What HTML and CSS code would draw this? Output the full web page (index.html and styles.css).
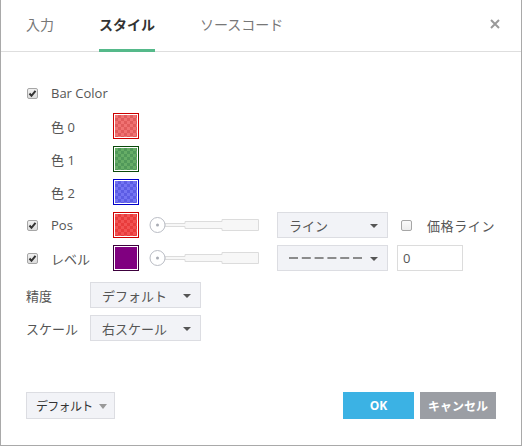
FILE: index.html
```html
<!DOCTYPE html>
<html lang="ja">
<head>
    <meta charset="UTF-8">
    <title>スタイル</title>
    <link rel="stylesheet" href="styles.css">
</head>
<body>
    <div class="dialog">
        <div class="tabs">
            <div class="tab">入力</div>
            <div class="tab active">スタイル</div>
            <div class="tab">ソースコード</div>
            <div class="close">
                <svg width="10" height="10" viewBox="0 0 10 10"><path d="M1 1L9 9M9 1L1 9" stroke="#9a9a9a" stroke-width="2"/></svg>
            </div>
        </div>

        <div class="content">
            <div class="row">
                <div class="chk-cell"><span class="chk on"><svg width="9" height="9" viewBox="0 0 9 9"><path d="M1.5 4.5L3.5 6.8L7.5 1.8" stroke="#333" stroke-width="2" fill="none"/></svg></span></div>
                <div class="lbl">Bar Color</div>
            </div>
            <div class="row">
                <div class="chk-cell"></div>
                <div class="lbl">色 0</div>
                <div class="swatch sw-red"><i></i></div>
            </div>
            <div class="row">
                <div class="chk-cell"></div>
                <div class="lbl">色 1</div>
                <div class="swatch sw-green"><i></i></div>
            </div>
            <div class="row">
                <div class="chk-cell"></div>
                <div class="lbl">色 2</div>
                <div class="swatch sw-blue"><i></i></div>
            </div>
            <div class="row">
                <div class="chk-cell"><span class="chk on"><svg width="9" height="9" viewBox="0 0 9 9"><path d="M1.5 4.5L3.5 6.8L7.5 1.8" stroke="#333" stroke-width="2" fill="none"/></svg></span></div>
                <div class="lbl">Pos</div>
                <div class="swatch sw-pos"><i></i></div>
                <svg class="slider" width="110" height="26" viewBox="0 0 110 26">
                    <path d="M16 11.5H36V9.5H73V7.5H109.5V18.5H73V16.5H36V14.5H16Z" fill="#f7f7f7" stroke="#dcdcdc"/>
                    <circle cx="8.5" cy="13" r="7.5" fill="#fff" stroke="#b9bcc4"/>
                    <circle cx="8.5" cy="13" r="1.5" fill="#a9acb4"/>
                </svg>
                <div class="select sel-line">ライン<span class="caret"></span></div>
                <span class="chk off price-chk"></span>
                <div class="side-lbl">価格ライン</div>
            </div>
            <div class="row">
                <div class="chk-cell"><span class="chk on"><svg width="9" height="9" viewBox="0 0 9 9"><path d="M1.5 4.5L3.5 6.8L7.5 1.8" stroke="#333" stroke-width="2" fill="none"/></svg></span></div>
                <div class="lbl">レベル</div>
                <div class="swatch sw-purple"><i></i></div>
                <svg class="slider" width="110" height="26" viewBox="0 0 110 26">
                    <path d="M16 11.5H36V9.5H73V7.5H109.5V18.5H73V16.5H36V14.5H16Z" fill="#f7f7f7" stroke="#dcdcdc"/>
                    <circle cx="8.5" cy="13" r="7.5" fill="#fff" stroke="#b9bcc4"/>
                    <circle cx="8.5" cy="13" r="1.5" fill="#a9acb4"/>
                </svg>
                <div class="select sel-line">
                    <svg width="74" height="4" viewBox="0 0 74 4"><line x1="0" y1="2" x2="73" y2="2" stroke="#6a6a6a" stroke-width="1.5" stroke-dasharray="9 3.8"/></svg>
                    <span class="caret"></span>
                </div>
                <div class="num-input">0</div>
            </div>

            <div class="row opt-row">
                <div class="opt-lbl">精度</div>
                <div class="select sel-opt">デフォルト<span class="caret"></span></div>
            </div>
            <div class="row">
                <div class="opt-lbl">スケール</div>
                <div class="select sel-opt">右スケール<span class="caret"></span></div>
            </div>
        </div>

        <div class="footer">
            <div class="btn-default">デフォルト<span class="caret big"></span></div>
            <div class="btn btn-ok">OK</div>
            <div class="btn btn-cancel">キャンセル</div>
        </div>
    </div>
</body>
</html>
```

FILE: styles.css
```css
* {
    margin: 0;
    padding: 0;
    box-sizing: border-box;
}
body {
    font-family: "Open Sans", "Noto Sans CJK JP", sans-serif;
    font-size: 13px;
    color: #555;
    background: #fff;
}
.dialog {
    width: 522px;
    height: 446px;
    border: 1px solid #a9a9a9;
    border-top: none;
    display: flex;
    flex-direction: column;
}
.tabs {
    display: flex;
    height: 52px;
    padding-left: 25px;
    border-bottom: 1px solid #dedede;
}
.tab {
    display: flex;
    align-items: center;
    font-size: 14px;
    color: #777;
    margin-right: 45px;
    padding-bottom: 2px;
    border-bottom: 3px solid transparent;
    margin-bottom: -1px;
}
.tab.active {
    color: #333;
    font-weight: bold;
    border-bottom-color: #55b98a;
}
.close {
    margin-left: auto;
    margin-right: 21px;
    display: flex;
    align-items: center;
    padding-bottom: 4px;
}
.content {
    padding: 28px 25px 0 25px;
}
.row {
    display: flex;
    align-items: center;
    height: 26px;
    margin-bottom: 7px;
}
.opt-row {
    margin-top: 11px;
}
.chk-cell {
    width: 25px;
    display: flex;
    align-items: center;
}
.chk {
    display: inline-flex;
    align-items: center;
    justify-content: center;
    width: 11px;
    height: 11px;
    margin-left: 1px;
    border: 1px solid #a6a6a6;
    border-radius: 2px;
    background: linear-gradient(#f0f0f0, #dcdcdc);
}
.chk.off {
    background: linear-gradient(#fafafa, #ececec);
}
.lbl {
    width: 62px;
    color: #555;
}
.swatch {
    width: 26px;
    height: 26px;
    border: 1px solid #c00;
    padding: 1px;
    background: #fff;
}
.swatch i {
    display: block;
    width: 100%;
    height: 100%;
    background-size: 6px 6px;
    background-position: 0 0, 3px 3px;
}
.sw-red i {
    background-color: #f07272;
    background-image: linear-gradient(45deg, #e05c5c 25%, transparent 25%, transparent 75%, #e05c5c 75%),
        linear-gradient(45deg, #e05c5c 25%, transparent 25%, transparent 75%, #e05c5c 75%);
}
.sw-green {
    border-color: #0b4a0b;
}
.sw-green i {
    background-color: #66ad66;
    background-image: linear-gradient(45deg, #51995a 25%, transparent 25%, transparent 75%, #51995a 75%),
        linear-gradient(45deg, #51995a 25%, transparent 25%, transparent 75%, #51995a 75%);
}
.sw-blue {
    border-color: #0000c8;
}
.sw-blue i {
    background-color: #7373f2;
    background-image: linear-gradient(45deg, #5c5ce4 25%, transparent 25%, transparent 75%, #5c5ce4 75%),
        linear-gradient(45deg, #5c5ce4 25%, transparent 25%, transparent 75%, #5c5ce4 75%);
}
.sw-pos i {
    background-color: #f25252;
    background-image: linear-gradient(45deg, #e83c3c 25%, transparent 25%, transparent 75%, #e83c3c 75%),
        linear-gradient(45deg, #e83c3c 25%, transparent 25%, transparent 75%, #e83c3c 75%);
}
.sw-purple {
    border-color: #3c003c;
}
.sw-purple i {
    background: #800080;
}
.slider {
    margin-left: 10px;
}
.select {
    display: flex;
    align-items: center;
    height: 26px;
    background: #f2f3f7;
    border: 1px solid #dcdde2;
    padding-left: 11px;
    color: #555;
    position: relative;
}
.sel-line {
    width: 111px;
    margin-left: 18px;
}
.sel-opt {
    width: 111px;
}
.caret {
    position: absolute;
    right: 9px;
    top: 11px;
    width: 0;
    height: 0;
    border-left: 4px solid transparent;
    border-right: 4px solid transparent;
    border-top: 4px solid #555;
}
.price-chk {
    margin-left: 13px;
}
.side-lbl {
    margin-left: 15px;
    letter-spacing: 0.6px;
}
.num-input {
    width: 66px;
    height: 26px;
    margin-left: 9px;
    border: 1px solid #dcdcdc;
    background: #fff;
    padding-left: 5px;
    display: flex;
    align-items: center;
}
.opt-lbl {
    width: 64px;
}
.footer {
    margin-top: auto;
    display: flex;
    align-items: center;
    padding: 0 25px 26px 25px;
}
.btn-default {
    display: flex;
    align-items: center;
    width: 89px;
    height: 27px;
    padding-left: 9px;
    background: #f2f3f7;
    border: 1px solid #dcdde2;
    color: #333;
    font-size: 12px;
    letter-spacing: -0.7px;
    position: relative;
}
.caret.big {
    right: 7px;
    top: 11px;
    border-left-width: 4px;
    border-right-width: 4px;
    border-top: 5px solid #999;
}
.btn {
    height: 27px;
    display: flex;
    align-items: center;
    justify-content: center;
    color: #fff;
    font-weight: bold;
    font-size: 12px;
}
.btn-ok {
    margin-left: auto;
    width: 71px;
    background: #3bb2e4;
}
.btn-cancel {
    margin-left: 6px;
    width: 76px;
    background: #9b9ea4;
}
```
